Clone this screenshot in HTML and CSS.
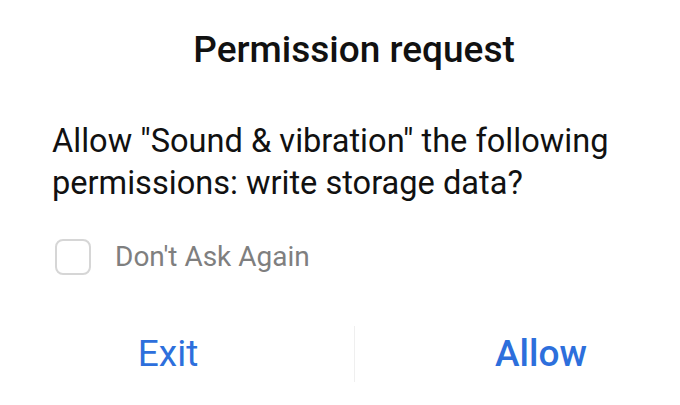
FILE: index.html
```html
<!DOCTYPE html>
<html>
<head>
<meta charset="utf-8">
<link rel="stylesheet" href="styles.css">
</head>
<body>
<div class="dialog">
  <h1 class="title">Permission request</h1>
  <p class="message">Allow "Sound &amp; vibration" the following permissions: write storage data?</p>
  <label class="check">
    <span class="box"></span>
    <span class="check-label">Don't Ask Again</span>
  </label>
  <div class="actions">
    <div class="btn exit">Exit</div>
    <div class="divider"></div>
    <div class="btn allow">Allow</div>
  </div>
</div>
</body>
</html>
```

FILE: styles.css
```css
html, body {
  margin: 0;
  padding: 0;
  background: #fff;
  overflow: hidden;
}
.dialog {
  width: 680px;
  height: 405px;
  font-family: Roboto, "Noto Sans", sans-serif;
  color: #111;
  display: flex;
  flex-direction: column;
  box-sizing: border-box;
  padding: 28px 0 0 0;
  overflow: hidden;
}
.title {
  margin: 0;
  font-size: 37px;
  font-weight: 500;
  text-align: center;
  line-height: 44px;
  padding-left: 28px;
}
.message {
  margin: 48px 0 0 52px;
  width: 610px;
  font-size: 32.6px;
  line-height: 42px;
  font-weight: 400;
}
.check {
  display: flex;
  align-items: center;
  margin: 35px 0 0 55px;
  gap: 24px;
}
.box {
  width: 32px;
  height: 32px;
  border: 2px solid #d6d6d6;
  border-radius: 8px;
}
.check-label {
  font-size: 28px;
  line-height: 36px;
  color: #7f7f7f;
}
.actions {
  display: flex;
  align-items: center;
  margin: 51px 0 0 -18px;
  width: 745px;
  height: 56px;
}
.btn {
  flex: 1;
  text-align: center;
  font-size: 37px;
  line-height: 56px;
  color: #2d6fdc;
}
.exit { font-weight: 400; }
.allow { font-weight: 500; }
.divider {
  width: 1px;
  height: 56px;
  background: #efefef;
}
```
